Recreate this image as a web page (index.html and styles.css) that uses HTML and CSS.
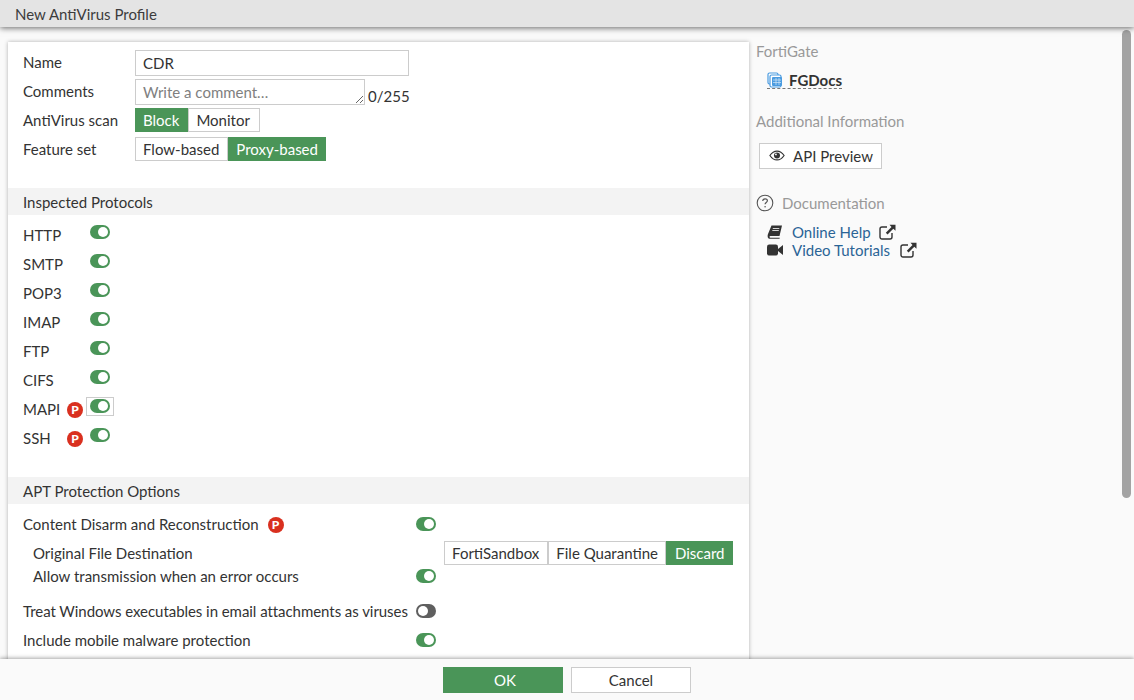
FILE: index.html
```html
<!DOCTYPE html>
<html lang="en">
<head>
<meta charset="utf-8">
<title>New AntiVirus Profile</title>
<link rel="stylesheet" href="styles.css">
</head>
<body>
<header class="title-bar">New AntiVirus Profile</header>
<div class="content">
  <main class="card">
    <div class="form-top">
      <div class="row row-name"><span class="label">Name</span><input class="text-input" value="CDR"></div>
      <div class="row row-comment"><span class="label">Comments</span><textarea class="comment" placeholder="Write a comment…"></textarea><span class="count">0/255</span></div>
      <div class="row row-seg"><span class="label">AntiVirus scan</span><div class="seg"><span class="seg-item active">Block</span><span class="seg-item seg-wide">Monitor</span></div></div>
      <div class="row row-seg2"><span class="label">Feature set</span><div class="seg"><span class="seg-item">Flow-based</span><span class="seg-item active">Proxy-based</span></div></div>
    </div>
    <h2 class="section">Inspected Protocols</h2>
    <div class="protocols">
      <div class="proto"><span class="proto-name">HTTP</span><span class="toggle on"></span></div>
      <div class="proto"><span class="proto-name">SMTP</span><span class="toggle on"></span></div>
      <div class="proto"><span class="proto-name">POP3</span><span class="toggle on"></span></div>
      <div class="proto"><span class="proto-name">IMAP</span><span class="toggle on"></span></div>
      <div class="proto"><span class="proto-name">FTP</span><span class="toggle on"></span></div>
      <div class="proto"><span class="proto-name">CIFS</span><span class="toggle on"></span></div>
      <div class="proto"><span class="proto-name">MAPI</span><span class="badge">P</span><span class="toggle on focused"></span></div>
      <div class="proto"><span class="proto-name">SSH</span><span class="badge">P</span><span class="toggle on"></span></div>
    </div>
    <h2 class="section">APT Protection Options</h2>
    <div class="options">
      <div class="opt opt-a"><span class="opt-label">Content Disarm and Reconstruction<span class="badge badge-inline">P</span></span><span class="toggle on"></span></div>
      <div class="opt opt-b"><span class="opt-label sub">Original File Destination</span><div class="seg seg-right"><span class="seg-item">FortiSandbox</span><span class="seg-item">File Quarantine</span><span class="seg-item active">Discard</span></div></div>
      <div class="opt opt-c"><span class="opt-label sub">Allow transmission when an error occurs</span><span class="toggle on"></span></div>
      <div class="opt opt-d"><span class="opt-label opt-tight">Treat Windows executables in email attachments as viruses</span><span class="toggle off"></span></div>
      <div class="opt opt-e"><span class="opt-label">Include mobile malware protection</span><span class="toggle on"></span></div>
    </div>
  </main>
  <aside class="side">
    <div class="side-title">FortiGate</div>
    <a class="fgdocs">
      <svg class="ico-docs" viewBox="0 0 16 16" width="16" height="16"><rect x="1" y="1" width="10" height="11" rx="1.5" fill="#fff" stroke="#4a9be0" stroke-width="1.2"/><rect x="3" y="3" width="11" height="12" rx="1.5" fill="#fff" stroke="#4a9be0" stroke-width="1.2"/><rect x="5" y="5" width="10" height="9" rx="1" fill="#4a9be0"/><path d="M6 8h8M6 10.5h8M9 6v7M12 6v7" stroke="#d5e8f8" stroke-width=".7"/></svg>
      <span>FGDocs</span>
    </a>
    <div class="side-title side-add">Additional Information</div>
    <button class="api-btn">
      <svg viewBox="0 0 18 12" width="16" height="11"><path d="M1 6c2-3 5-5 8-5s6 2 8 5c-2 3-5 5-8 5S3 9 1 6z" fill="none" stroke="#333" stroke-width="1.3"/><circle cx="9" cy="6" r="3.4" fill="#333"/><circle cx="7.8" cy="4.8" r="1" fill="#fff"/></svg>
      <span>API Preview</span>
    </button>
    <div class="doc-head">
      <svg viewBox="0 0 18 18" width="18" height="18"><circle cx="9" cy="9" r="7.8" fill="none" stroke="#555" stroke-width="1.1"/><path d="M6.7 7c.1-1.4 1.1-2.2 2.4-2.2s2.3.8 2.3 2c0 1.7-2.3 1.7-2.3 3.4" fill="none" stroke="#555" stroke-width="1.2"/><circle cx="9.1" cy="12.7" r=".8" fill="#555"/></svg>
      <span>Documentation</span>
    </div>
    <div class="doc-links">
      <div class="doc-link">
        <svg class="lead" viewBox="0 0 16 14" width="16" height="14"><path d="M4.5 .5H15l-2.500 10.500H3.400C2.300 11 2.200 12.700 3.400 12.700h9.400l-.3 1.100H2.700C.6 13.800 .3 11 1 9z" fill="#333"/><path d="M5.800 3.500h6.500M5.300 5.500h6.500" stroke="#fff" stroke-width=".8"/></svg>
        <a>Online Help</a>
        <svg class="ext" viewBox="0 0 17 16" width="17" height="16"><path d="M13 9v4a2 2 0 0 1-2 2H3a2 2 0 0 1-2-2V5a2 2 0 0 1 2-2h5" fill="none" stroke="#333" stroke-width="1.4"/><path d="M10.500 .8H16.500V6.800L14.300 4.800 8.500 10.500 6.800 8.800 12.500 3z" fill="#333"/></svg>
      </div>
      <div class="doc-link">
        <svg class="lead" viewBox="0 0 16 12" width="16" height="12"><rect x="0" y="0.500" width="11" height="11" rx="2.200" fill="#333"/><path d="M11 5l5-4v10L11 7z" fill="#333"/></svg>
        <a>Video Tutorials</a>
        <svg class="ext ext-far" viewBox="0 0 17 16" width="17" height="16"><path d="M13 9v4a2 2 0 0 1-2 2H3a2 2 0 0 1-2-2V5a2 2 0 0 1 2-2h5" fill="none" stroke="#333" stroke-width="1.4"/><path d="M10.500 .8H16.500V6.800L14.300 4.800 8.500 10.500 6.800 8.800 12.500 3z" fill="#333"/></svg>
      </div>
    </div>
  </aside>
  <div class="scroll-thumb"></div>
</div>
<footer class="footer">
  <button class="btn btn-ok">OK</button>
  <button class="btn btn-cancel">Cancel</button>
</footer>
</body>
</html>
```
FILE: styles.css
```css
* { box-sizing: border-box; }
html, body { height: 100%; }
body {
  margin: 0;
  height: 700px;
  overflow: hidden;
  display: flex;
  flex-direction: column;
  font-family: Lato, "Liberation Sans", sans-serif;
  font-size: 15px;
  color: #333;
  background: #fafafa;
}
.title-bar {
  position: relative;
  z-index: 3;
  height: 27px;
  flex: none;
  padding-left: 15px;
  line-height: 29px;
  background: #e4e4e4;
  color: #3c3c3c;
  box-shadow: 0 1px 6px rgba(0, 0, 0, .6);
}
.content {
  position: relative;
  flex: 1;
  min-height: 0;
  overflow: hidden;
  display: flex;
  align-items: flex-start;
  padding: 15px 0 0 8px;
}
.card {
  width: 741px;
  height: 640px;
  flex: none;
  background: #fff;
  box-shadow: 0 0 4px rgba(0, 0, 0, .3);
}
.form-top { height: 146px; padding: 8px 0 0 15px; }
.row { display: flex; align-items: flex-start; }
.label { width: 112px; flex: none; line-height: 25px; }
.row-name { height: 29px; }
.row-comment { height: 29px; }
.row-seg { height: 29px; }
.text-input, .comment {
  border: 1px solid #ccc;
  background: #fff;
  font: inherit;
  color: #333;
  outline: none;
  padding: 0 7px;
}
.text-input { width: 274px; height: 26px; }
.comment { width: 230px; height: 26px; resize: both; line-height: 25px; overflow: hidden; }
.comment::placeholder { color: #808080; opacity: 1; }
.count { margin: 5px 0 0 3px; line-height: 25px; }
.seg { display: flex; height: 24px; }
.seg-item {
  padding: 0 7.5px;
  border: 1px solid #ccc;
  line-height: 23px;
  background: #fff;
  white-space: nowrap;
}
.seg-item:first-child { padding-left: 7px; }
.seg-wide { padding: 0 9.5px 0 7.5px; }
.seg-item.active { background: #4a9558; border-color: #4a9558; color: #fff; }
.section {
  margin: 0;
  height: 27px;
  padding-left: 15px;
  background: #f3f3f3;
  font-size: inherit;
  font-weight: 400;
  line-height: 29px;
}
.protocols { height: 262px; padding: 6px 0 0 15px; }
.proto { display: flex; align-items: center; height: 29px; position: relative; }
.proto-name { width: 44px; flex: none; padding-bottom: 1px; }
.badge {
  width: 16px;
  height: 16px;
  border-radius: 50%;
  background: #d9301f;
  color: #fff;
  font-size: 12px;
  font-weight: 900;
  line-height: 16px;
  text-align: center;
  flex: none;
}
.toggle {
  position: absolute;
  left: 67px;
  top: 4px;
  width: 20px;
  height: 14px;
  border-radius: 7px;
  display: block;
}
.toggle::after {
  content: "";
  position: absolute;
  top: 2px;
  width: 10px;
  height: 10px;
  border-radius: 50%;
  background: #fff;
}
.toggle.on { background: #4a9558; }
.toggle.on::after { right: 2px; }
.toggle.off { background: #5f5f5f; }
.toggle.off::after { left: 2px; }
.toggle.focused::before {
  content: "";
  position: absolute;
  inset: -2px -4px -3px;
  border: 1px solid #ccc;
}
.options { padding: 5px 16px 0 15px; }
.opt { position: relative; display: flex; align-items: center; justify-content: space-between; }
.opt-a { height: 29px; }
.opt-b { height: 29px; }
.opt-c { height: 17px; margin-bottom: 18px; }
.opt-d { height: 17px; margin-bottom: 12px; }
.opt-e { height: 17px; }
.opt .toggle { left: 393px; top: 50%; margin-top: -7px; }
.opt-label.sub { margin-left: 10px; }
.opt-tight { letter-spacing: -.05px; }
.badge-inline { display: inline-block; margin-left: 9px; vertical-align: 1px; }
.side { padding: 0 0 0 7px; flex: 1; }
.side-title { color: #999; line-height: 18px; }
.fgdocs {
  display: inline-flex;
  align-items: center;
  gap: 6px;
  margin: 11px 0 0 11px;
  height: 18px;
  font-weight: 700;
  color: #333;
  border-bottom: 1px dashed #777;
}
.side-add { margin-top: 21px; }
.api-btn {
  display: flex;
  align-items: center;
  gap: 8px;
  height: 26px;
  width: 123px;
  margin: 13px 0 0 3px;
  padding: 0 0 0 9px;
  border: 1px solid #ccc;
  background: #fff;
  font: inherit;
  color: #333;
}
.doc-head { display: flex; align-items: center; gap: 8px; margin-top: 25px; color: #999; }
.doc-links { margin-top: 11px; padding-left: 11px; }
.doc-link { display: flex; align-items: center; height: 18px; }
.doc-link .lead { width: 16px; flex: none; }
.doc-link a { color: #2a6496; margin-left: 9px; }
.doc-link .ext { margin-left: 8px; }
.doc-link .ext-far { margin-left: 10px; }
.scroll-thumb {
  position: absolute;
  top: 3px;
  right: 3px;
  width: 9px;
  height: 468px;
  border-radius: 5px;
  background: #a3a3a3;
}
.footer {
  position: relative;
  z-index: 3;
  flex: none;
  height: 41px;
  display: flex;
  justify-content: center;
  gap: 8px;
  padding-top: 8px;
  background: #fafafa;
  box-shadow: 0 -1px 4px rgba(0, 0, 0, .35);
}
.btn {
  width: 120px;
  height: 26px;
  font: inherit;
  padding: 0;
  border: 1px solid #ccc;
  background: #fff;
  color: #333;
}
.btn-ok { background: #4a9558; border-color: #4a9558; color: #fff; padding-left: 4px; }
```
